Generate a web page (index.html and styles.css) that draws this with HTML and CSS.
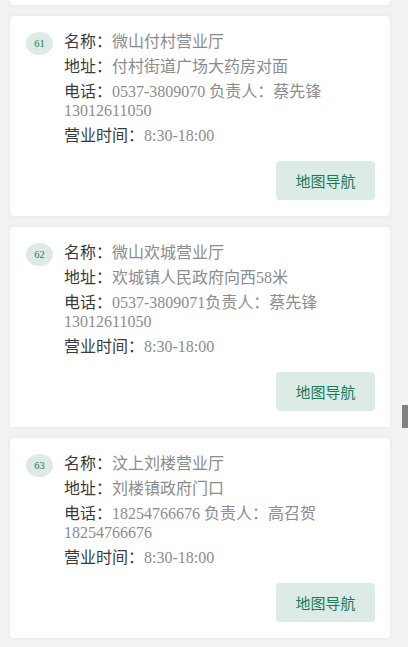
FILE: index.html
```html
<!DOCTYPE html>
<html lang="zh-CN">
<head>
<meta charset="utf-8">
<title>营业厅列表</title>
<link rel="stylesheet" href="styles.css">
</head>
<body>
<div class="list">
  <div class="card card-partial"></div>
  <div class="card">
    <div class="info">
      <span class="badge">61</span>
      <div class="lines">
        <p class="row"><span class="label">名称：</span><span class="val">微山付村营业厅</span></p>
        <p class="row"><span class="label">地址：</span><span class="val">付村街道广场大药房对面</span></p>
        <p class="row"><span class="label">电话：</span><span class="val">0537-3809070 负责人：蔡先锋</span> <span class="val">13012611050</span></p>
        <p class="row"><span class="label">营业时间：</span><span class="val">8:30-18:00</span></p>
      </div>
    </div>
    <div class="actions"><button class="nav-btn">地图导航</button></div>
  </div>
  <div class="card">
    <div class="info">
      <span class="badge">62</span>
      <div class="lines">
        <p class="row"><span class="label">名称：</span><span class="val">微山欢城营业厅</span></p>
        <p class="row"><span class="label">地址：</span><span class="val">欢城镇人民政府向西58米</span></p>
        <p class="row"><span class="label">电话：</span><span class="val">0537-3809071负责人：蔡先锋</span> <span class="val">13012611050</span></p>
        <p class="row"><span class="label">营业时间：</span><span class="val">8:30-18:00</span></p>
      </div>
    </div>
    <div class="actions"><button class="nav-btn">地图导航</button></div>
  </div>
  <div class="card">
    <div class="info">
      <span class="badge">63</span>
      <div class="lines">
        <p class="row"><span class="label">名称：</span><span class="val">汶上刘楼营业厅</span></p>
        <p class="row"><span class="label">地址：</span><span class="val">刘楼镇政府门口</span></p>
        <p class="row"><span class="label">电话：</span><span class="val">18254766676 负责人：高召贺</span> <span class="val">18254766676</span></p>
        <p class="row"><span class="label">营业时间：</span><span class="val">8:30-18:00</span></p>
      </div>
    </div>
    <div class="actions"><button class="nav-btn">地图导航</button></div>
  </div>
</div>
<div class="scroll-thumb"></div>
</body>
</html>
```
FILE: styles.css
```css
html, body {
  margin: 0;
  padding: 0;
  background: #f2f2f2;
  overflow: hidden;
  height: 647px;
}
body {
  font-family: "Liberation Serif", "Noto Sans CJK SC", serif;
  position: relative;
}
.list {
  display: flex;
  flex-direction: column;
  gap: 11px;
  padding: 0 18px 0 10px;
  margin-top: -195px;
}
.card {
  background: #fff;
  border-radius: 4px;
  box-shadow: 0 0 5px rgba(0, 0, 0, 0.05);
  padding: 16px 15px 16px 16px;
  height: 200px;
  box-sizing: border-box;
  display: flex;
  flex-direction: column;
}
.info {
  display: flex;
  align-items: flex-start;
  gap: 11px;
}
.badge {
  flex: none;
  width: 27px;
  height: 23px;
  border-radius: 50%;
  background: #dcebe5;
  color: #1b7a56;
  font-size: 10.5px;
  display: flex;
  align-items: center;
  justify-content: center;
}
.lines {
  flex: 1;
  display: flex;
  flex-direction: column;
  gap: 6px;
}
.row {
  margin: 0;
  font-size: 16px;
  line-height: 19px;
}
.label {
  display: inline-block;
  height: 19px;
  color: #3a3a3a;
}
.val {
  color: #8c8c8c;
}
.actions {
  display: flex;
  justify-content: flex-end;
  margin-top: 16px;
}
.nav-btn {
  width: 99px;
  height: 39px;
  border: none;
  border-radius: 4px;
  background: #dcebe5;
  color: #1b7a56;
  font-family: "Noto Sans CJK SC", sans-serif;
  font-size: 15px;
  padding: 0;
}
.scroll-thumb {
  position: absolute;
  right: 0;
  top: 405px;
  width: 6px;
  height: 23px;
  background: #808080;
}
```
